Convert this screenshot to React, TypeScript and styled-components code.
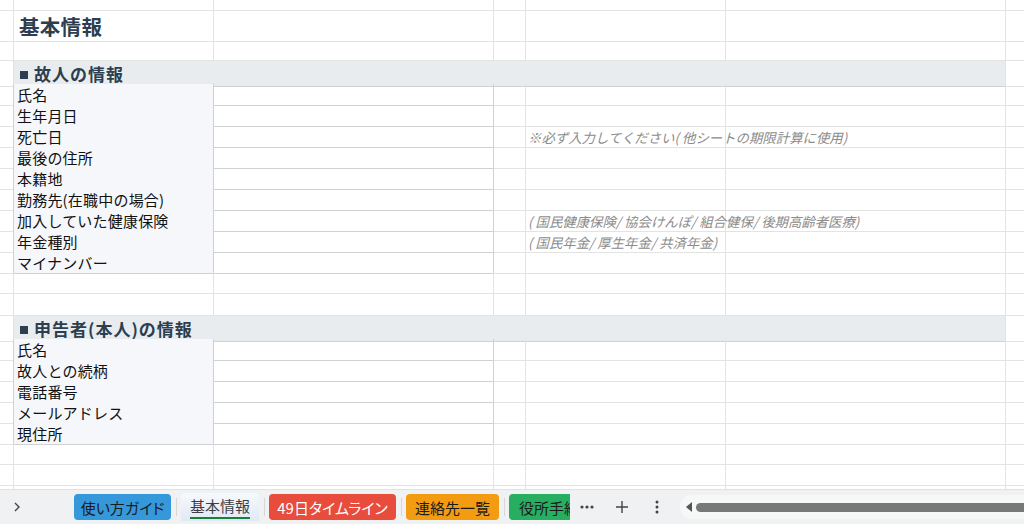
import React from "react";
import styled, { createGlobalStyle } from "styled-components";

const Global = createGlobalStyle`
  html, body { margin: 0; padding: 0; }
  body {
    width: 1024px;
    height: 524px;
    overflow: hidden;
    background: #ffffff;
    font-family: "Noto Sans CJK JP", "Noto Sans", sans-serif;
  }
`;

const COLS = "14px 200px 280px 32px 200px 280px 18px";
const GRID = "#e2e3e3";
const DATA = "#cfd1d3";

const Page = styled.div`
  width: 1024px;
  height: 524px;
  display: flex;
  flex-direction: column;
  overflow: hidden;
`;

const Sheet = styled.div`
  flex: 1;
  overflow: hidden;
  display: flex;
  flex-direction: column;
`;

const Row = styled.div<{ $h: number }>`
  display: grid;
  grid-template-columns: ${COLS};
  height: ${(p) => p.$h}px;
  flex: none;
`;

const Cell = styled.div<{ $span?: number; $noRight?: boolean }>`
  box-sizing: border-box;
  border-right: ${(p) => (p.$noRight ? "none" : `1px solid ${GRID}`)};
  border-bottom: 1px solid ${GRID};
  grid-column: span ${(p) => p.$span ?? 1};
  white-space: nowrap;
  overflow: visible;
  position: relative;
  z-index: 1;
  min-width: 0;
`;

const TitleCell = styled(Cell)`
  font-size: 20.5px;
  font-weight: 700;
  color: #2c3e50;
  padding-left: 5px;
  display: flex;
  align-items: center;
  letter-spacing: 0.3px;
`;

const SectionCell = styled(Cell)`
  background: #e9ecee;
  font-size: 17px;
  font-weight: 700;
  color: #2c3e50;
  padding-left: 6px;
  display: flex;
  align-items: center;
  border-bottom: 1px solid ${DATA};
  letter-spacing: 1px;
`;

const Square = styled.span`
  display: inline-block;
  width: 8px;
  height: 8px;
  background: #2c3e50;
  margin-right: 6px;
  margin-top: 2px;
  flex: none;
`;

const LabelCell = styled(Cell)`
  background: #f5f7fa;
  border-right: 1px solid ${DATA};
  border-bottom: 1px solid ${DATA};
  font-size: 15px;
  color: #111;
  padding-left: 3px;
  display: flex;
  align-items: center;
  letter-spacing: 0.2px;
`;

const EdgeCell = styled(Cell)`
  border-right: 1px solid ${DATA};
`;

const ValueCell = styled(Cell)`
  border-right: 1px solid ${DATA};
  border-bottom: 1px solid ${DATA};
`;

const NoteCell = styled(Cell)`
  font-size: 13.4px;
  font-style: italic;
  color: #8c8c8c;
  padding-left: 2px;
  display: flex;
  align-items: center;
  z-index: 2;
`;

const Bar = styled.div`
  height: 35px;
  flex: none;
  background: #f0f1f2;
  border-top: 1px solid #e0e1e2;
  box-sizing: border-box;
  display: flex;
  align-items: center;
  font-family: "Noto Sans CJK JP", "Noto Sans", sans-serif;
  font-feature-settings: "palt";
`;

const Chevron = styled.div`
  width: 36px;
  padding-left: 12px;
  box-sizing: border-box;
  color: #444;
  display: flex;
  align-items: center;
`;

const Tabs = styled.div`
  margin-left: 38px;
  width: 496px;
  display: flex;
  align-items: center;
  overflow: hidden;
  flex: none;
`;

const Sep = styled.div`
  width: 1px;
  height: 18px;
  background: #d6d7d8;
  margin: 0 4.5px;
  flex: none;
`;

const Tab = styled.div<{ $bg: string; $fg: string; $w: number }>`
  height: 26px;
  width: ${(p) => p.$w}px;
  flex: none;
  box-sizing: border-box;
  border-radius: 4px;
  background: ${(p) => p.$bg};
  color: ${(p) => p.$fg};
  font-size: 15px;
  display: flex;
  align-items: center;
  justify-content: center;
  white-space: nowrap;
  overflow: hidden;
`;

const ClippedTab = styled(Tab)`
  justify-content: flex-start;
  padding-left: 10px;
  border-radius: 4px 0 0 4px;
`;

const ActiveTab = styled.div`
  height: 28px;
  width: 78px;
  flex: none;
  box-sizing: border-box;
  border-radius: 4px 4px 0 0;
  background: linear-gradient(#f7f9fc, #dfe9f6);
  color: #3c4043;
  font-size: 15px;
  display: flex;
  align-items: center;
  justify-content: center;
`;

const Underlined = styled.span`
  border-bottom: 2px solid #188038;
  line-height: 20px;
  padding-bottom: 1px;
`;

const Tool = styled.div<{ $w: number }>`
  width: ${(p) => p.$w}px;
  flex: none;
  display: flex;
  align-items: center;
  justify-content: center;
  color: #444;
`;

const Scroll = styled.div`
  flex: 1;
  height: 24px;
  margin-left: 6px;
  background: #f6f7f7;
  border-radius: 12px 0 0 12px;
  display: flex;
  align-items: center;
  padding-left: 6px;
  gap: 3px;
  overflow: hidden;
`;

const Thumb = styled.div`
  flex: 1;
  height: 9px;
  border-radius: 5px 0 0 5px;
  background: #787878;
`;

type Line =
  | { k: "blank"; h: number }
  | { k: "title"; h: number; t: string }
  | { k: "section"; h: number; t: string }
  | { k: "data"; h: number; t: string; note?: string };

const lines: Line[] = [
  { k: "blank", h: 11 },
  { k: "title", h: 30, t: "基本情報" },
  { k: "blank", h: 20 },
  { k: "section", h: 23, t: "故人の情報" },
  { k: "data", h: 21, t: "氏名" },
  { k: "data", h: 21, t: "生年月日" },
  { k: "data", h: 21, t: "死亡日", note: "※必ず入力してください( 他シートの期限計算に使用)" },
  { k: "data", h: 21, t: "最後の住所" },
  { k: "data", h: 21, t: "本籍地" },
  { k: "data", h: 21, t: "勤務先(在職中の場合)" },
  { k: "data", h: 21, t: "加入していた健康保険", note: "( 国民健康保険/ 協会けんぽ/ 組合健保/ 後期高齢者医療)" },
  { k: "data", h: 21, t: "年金種別", note: "( 国民年金/ 厚生年金/ 共済年金)" },
  { k: "data", h: 21, t: "マイナンバー" },
  { k: "blank", h: 21 },
  { k: "blank", h: 22 },
  { k: "section", h: 23, t: "申告者(本人)の情報" },
  { k: "data", h: 21, t: "氏名" },
  { k: "data", h: 21, t: "故人との続柄" },
  { k: "data", h: 21, t: "電話番号" },
  { k: "data", h: 21, t: "メールアドレス" },
  { k: "data", h: 21, t: "現住所" },
  { k: "blank", h: 21 },
  { k: "blank", h: 21 },
  { k: "blank", h: 21 },
];

function SheetRow({ line }: { line: Line }) {
  if (line.k === "title") {
    return (
      <Row $h={line.h}>
        <Cell />
        <TitleCell>{line.t}</TitleCell>
        <Cell /><Cell /><Cell /><Cell /><Cell $noRight />
      </Row>
    );
  }
  if (line.k === "section") {
    return (
      <Row $h={line.h}>
        <Cell />
        <SectionCell $span={5}>
          <Square />
          {line.t}
        </SectionCell>
        <Cell $noRight />
      </Row>
    );
  }
  if (line.k === "data") {
    return (
      <Row $h={line.h}>
        <EdgeCell />
        <LabelCell>{line.t}</LabelCell>
        <ValueCell />
        <Cell />
        <NoteCell>{line.note ?? ""}</NoteCell>
        <Cell />
        <Cell $noRight />
      </Row>
    );
  }
  return (
    <Row $h={line.h}>
      <Cell /><Cell /><Cell /><Cell /><Cell /><Cell /><Cell $noRight />
    </Row>
  );
}

export default function App() {
  return (
    <Page>
      <Global />
      <Sheet>
        {lines.map((l, i) => (
          <SheetRow key={i} line={l} />
        ))}
      </Sheet>
      <Bar>
        <Chevron>
          <svg width="10" height="12" viewBox="0 0 10 12">
            <path d="M3 2 L7 6 L3 10" fill="none" stroke="#444" strokeWidth="1.4" />
          </svg>
        </Chevron>
        <Tabs>
          <Tab $bg="#3498db" $fg="#1b1b1b" $w={97}>使い方ガイド</Tab>
          <Sep />
          <ActiveTab><Underlined>基本情報</Underlined></ActiveTab>
          <Sep />
          <Tab $bg="#e74c3c" $fg="#ffffff" $w={127}>49日タイムライン</Tab>
          <Sep />
          <Tab $bg="#f39c12" $fg="#1b1b1b" $w={93}>連絡先一覧</Tab>
          <Sep />
          <ClippedTab $bg="#27ae60" $fg="#1b1b1b" $w={61}>役所手続き</ClippedTab>
        </Tabs>
        <Tool $w={34}>
          <svg width="14" height="4" viewBox="0 0 14 4">
            <circle cx="2" cy="2" r="1.6" fill="#444" />
            <circle cx="7" cy="2" r="1.6" fill="#444" />
            <circle cx="12" cy="2" r="1.6" fill="#444" />
          </svg>
        </Tool>
        <Tool $w={36}>
          <svg width="14" height="14" viewBox="0 0 14 14">
            <path d="M7 1 V13 M1 7 H13" stroke="#444" strokeWidth="1.4" />
          </svg>
        </Tool>
        <Tool $w={34}>
          <svg width="4" height="14" viewBox="0 0 4 14">
            <circle cx="2" cy="2" r="1.5" fill="#444" />
            <circle cx="2" cy="7" r="1.5" fill="#444" />
            <circle cx="2" cy="12" r="1.5" fill="#444" />
          </svg>
        </Tool>
        <Scroll>
          <svg width="7" height="10" viewBox="0 0 7 10">
            <path d="M6 0 L0 5 L6 10 Z" fill="#555" />
          </svg>
          <Thumb />
        </Scroll>
      </Bar>
    </Page>
  );
}
